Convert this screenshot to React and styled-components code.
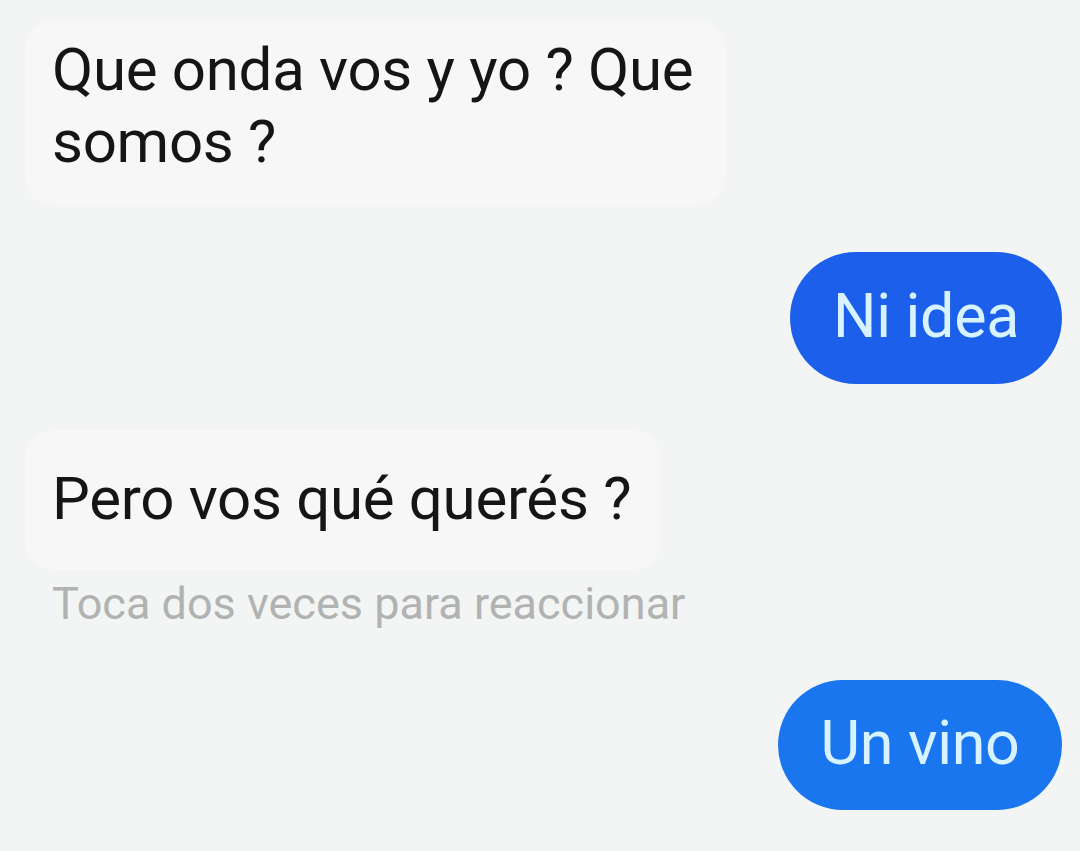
import React from "react";
import styled, { createGlobalStyle } from "styled-components";

const GlobalStyle = createGlobalStyle`
  html, body {
    margin: 0;
    padding: 0;
    background: #f3f5f4;
  }
  body {
    font-family: Roboto, "Liberation Sans", sans-serif;
  }
`;

const Chat = styled.div`
  width: 1080px;
  height: 851px;
  box-sizing: border-box;
  padding: 20px 18px 0 25px;
  display: flex;
  flex-direction: column;
  overflow: hidden;
  background: #f3f5f4;

  & > * {
    flex-shrink: 0;
  }
`;

const Incoming = styled.div`
  align-self: flex-start;
  box-sizing: border-box;
  width: ${(p) => p.width}px;
  padding: ${(p) => p.pad};
  margin-top: ${(p) => p.top || 0}px;
  background: #f6f7f6;
  border-radius: 28px;
  color: #151515;
  font-size: 60px;
  line-height: 72px;
  letter-spacing: -0.3px;
  white-space: nowrap;
`;

const Outgoing = styled.div`
  align-self: flex-end;
  box-sizing: border-box;
  width: ${(p) => p.width}px;
  height: ${(p) => p.height}px;
  margin-top: ${(p) => p.top}px;
  display: flex;
  align-items: center;
  justify-content: center;
  border-radius: 70px;
  background: ${(p) => p.bg};
  color: #d6f3ff;
  font-size: 61px;
  letter-spacing: -0.3px;
  padding-bottom: 4px;
`;

const Hint = styled.div`
  margin: 8px 0 0 27px;
  color: #b1b3b2;
  font-size: 45px;
  line-height: 52px;
  white-space: nowrap;
`;

export default function App() {
  return (
    <>
      <GlobalStyle />
      <Chat>
        <Incoming width={700} pad="14px 20px 27px 27px">
          Que onda vos y yo ? Que
          <br />
          somos ?
        </Incoming>
        <Outgoing width={272} height={132} top={47} bg="#1b5fea">
          Ni idea
        </Outgoing>
        <Incoming width={635} pad="33px 20px 35px 27px" top={46}>
          Pero vos qué querés ?
        </Incoming>
        <Hint>Toca dos veces para reaccionar</Hint>
        <Outgoing width={284} height={130} top={50} bg="#1a76ef">
          Un vino
        </Outgoing>
      </Chat>
    </>
  );
}
